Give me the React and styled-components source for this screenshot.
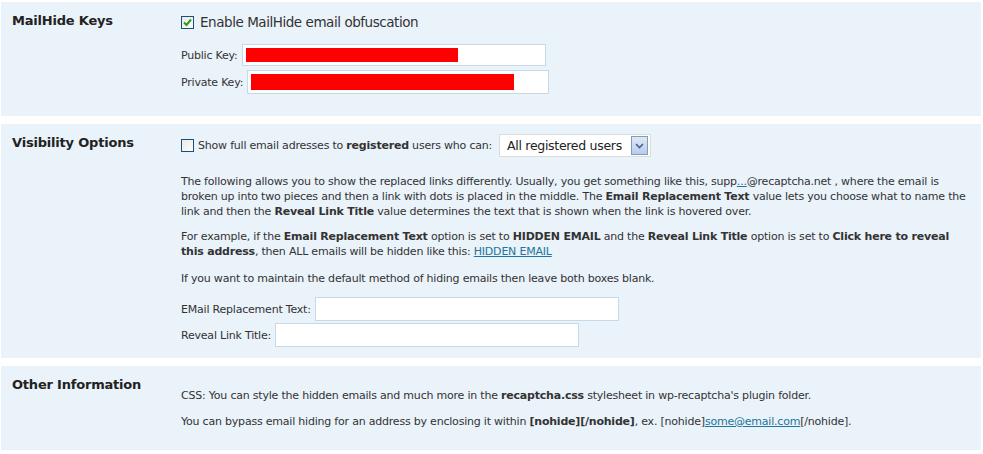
import React from "react";
import styled, { createGlobalStyle } from "styled-components";

const Global = createGlobalStyle`
  html, body { margin: 0; padding: 0; background: #fff; }
  body { font-family: "DejaVu Sans", Verdana, sans-serif; color: #333; }
`;

const Page = styled.div`
  display: flex;
  flex-direction: column;
  gap: 8px;
  padding: 2px 2px 4px 1px;
`;

const Section = styled.section`
  display: grid;
  grid-template-columns: 180px 1fr;
  background: #eaf2fa;
  height: ${(p) => p.$h}px;
  box-sizing: border-box;
  padding-top: ${(p) => p.$pt}px;
`;

const Title = styled.h3`
  margin: 0;
  padding: ${(p) => p.$pt || 0}px 0 0 11px;
  font-size: 13px;
  font-weight: bold;
  letter-spacing: -0.2px;
  color: #222;
  line-height: 16px;
`;

const Content = styled.div`
  font-size: 11px;
  line-height: 15px;
  letter-spacing: -0.21px;
  color: #333;
  padding-right: 10px;
`;

const CheckRow = styled.label`
  display: flex;
  align-items: center;
  gap: ${(p) => p.$gap || 5}px;
  font-size: ${(p) => p.$fs || 11}px;
  letter-spacing: ${(p) => p.$ls ?? -0.21}px;
  color: #333;
  margin: ${(p) => p.$m || "0"};
  white-space: nowrap;
`;

const Box = styled.span`
  width: 11px;
  height: 11px;
  border: 1px solid #1d4f7c;
  background: linear-gradient(135deg, #e9e9e6, #fdfdfd);
  display: inline-flex;
  align-items: center;
  justify-content: center;
  flex: none;
`;

const KeyRow = styled.div`
  display: flex;
  align-items: center;
  gap: 4px;
  margin: ${(p) => p.$m || "0"};
`;

const Field = styled.div`
  width: ${(p) => p.$w}px;
  height: ${(p) => p.$h || 22}px;
  box-sizing: border-box;
  background: #fff;
  border: 1px solid #c6d9e9;
  padding: 3px 3px;
  display: flex;
  align-items: stretch;
`;

const Redact = styled.div`
  background: #ff0000;
  width: ${(p) => p.$w}px;
`;

const Select = styled.div`
  display: inline-flex;
  align-items: center;
  justify-content: space-between;
  box-sizing: border-box;
  width: 152px;
  height: 23px;
  background: #fff;
  border: 1px solid #dcdcdc;
  padding: 0 2px 0 7px;
  font-size: 12.5px;
  letter-spacing: -0.3px;
  color: #222;
  margin-left: 3px;
  white-space: nowrap;
`;

const Arrow = styled.span`
  width: 15px;
  height: 17px;
  border: 1px solid #7f9db9;
  background: linear-gradient(#e0e8f7, #b9cbee);
  display: inline-flex;
  align-items: center;
  justify-content: center;
  box-sizing: content-box;
`;

const P = styled.p`
  margin: ${(p) => p.$m || "0 0 10px"};
`;

const A = styled.a`
  color: #21759b;
  text-decoration: underline;
`;

const Check = () => (
  <svg width="9" height="9" viewBox="0 0 9 9">
    <path d="M1 4.5 L3.5 7 L8 1.5" stroke="#21a121" strokeWidth="2" fill="none" />
  </svg>
);

export default function App() {
  return (
    <>
      <Global />
      <Page>
        <Section $h={114} $pt={11}>
          <Title $pt={0}>MailHide Keys</Title>
          <Content>
            <CheckRow $fs={13.5} $gap={6} $ls={-0.45} $m="2px 0 0">
              <Box><Check /></Box>
              Enable MailHide email obfuscation
            </CheckRow>
            <KeyRow $m="14px 0 0">
              Public Key:
              <Field $w={304} $h={22}><Redact $w={212} /></Field>
            </KeyRow>
            <KeyRow $m="4px 0 0">
              Private Key:
              <Field $w={302} $h={24}><Redact $w={263} /></Field>
            </KeyRow>
          </Content>
        </Section>

        <Section $h={234} $pt={11}>
          <Title $pt={0}>Visibility Options</Title>
          <Content>
            <CheckRow $gap={4} $m="-1px 0 0">
              <Box />
              <span>Show full email adresses to <b>registered</b> users who can:</span>
              <Select>
                All registered users
                <Arrow>
                  <svg width="9" height="6" viewBox="0 0 9 6">
                    <path d="M1 1 L4.5 4.5 L8 1" stroke="#4d6185" strokeWidth="1.6" fill="none" />
                  </svg>
                </Arrow>
              </Select>
            </CheckRow>
            <P $m="17px 0 10px">
              The following allows you to show the replaced links differently. Usually, you get something like this, supp<A>...</A>@recaptcha.net , where the email is broken up into two pieces and then a link with dots is placed in the middle. The <b>Email Replacement Text</b> value lets you choose what to name the link and then the <b>Reveal Link Title</b> value determines the text that is shown when the link is hovered over.
            </P>
            <P>
              For example, if the <b>Email Replacement Text</b> option is set to <b>HIDDEN EMAIL</b> and the <b>Reveal Link Title</b> option is set to <b>Click here to reveal this address</b>, then ALL emails will be hidden like this: <A>HIDDEN EMAIL</A>
            </P>
            <P $m="12px 0 11px">
              If you want to maintain the default method of hiding emails then leave both boxes blank.
            </P>
            <KeyRow>
              EMail Replacement Text:
              <Field $w={304} $h={24} />
            </KeyRow>
            <KeyRow $m="2px 0 0">
              Reveal Link Title:
              <Field $w={304} $h={24} />
            </KeyRow>
          </Content>
        </Section>

        <Section $h={84} $pt={10}>
          <Title $pt={1}>Other Information</Title>
          <Content>
            <P $m="12px 0 11px">
              CSS: You can style the hidden emails and much more in the <b>recaptcha.css</b> stylesheet in wp-recaptcha's plugin folder.
            </P>
            <P $m="0">
              You can bypass email hiding for an address by enclosing it within <b>[nohide][/nohide]</b>, ex. [nohide]<A>some@email.com</A>[/nohide].
            </P>
          </Content>
        </Section>
      </Page>
    </>
  );
}
